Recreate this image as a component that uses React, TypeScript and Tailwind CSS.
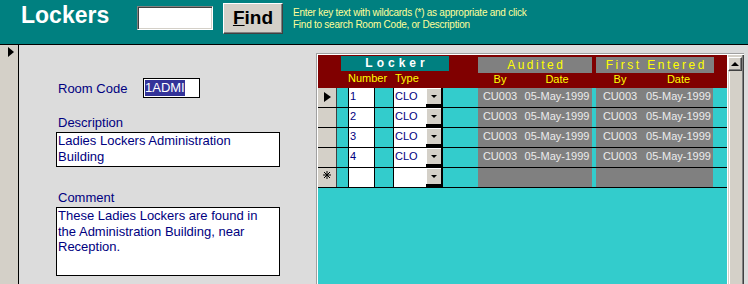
import React from "react";

type Locker = {
  num: string;
  type: string;
  by: string;
  date: string;
  firstBy: string;
  firstDate: string;
};

const lockers: Locker[] = [
  { num: "1", type: "CLO", by: "CU003", date: "05-May-1999", firstBy: "CU003", firstDate: "05-May-1999" },
  { num: "2", type: "CLO", by: "CU003", date: "05-May-1999", firstBy: "CU003", firstDate: "05-May-1999" },
  { num: "3", type: "CLO", by: "CU003", date: "05-May-1999", firstBy: "CU003", firstDate: "05-May-1999" },
  { num: "4", type: "CLO", by: "CU003", date: "05-May-1999", firstBy: "CU003", firstDate: "05-May-1999" },
];

function LockerRow({ rec, current, isNew }: { rec?: Locker; current?: boolean; isNew?: boolean }) {
  return (
    <div className="flex h-[20px] border-b border-black text-[11px] leading-[14px]">
      {/* record selector */}
      <div className="flex w-[19px] justify-center border-r border-[#404040] bg-[#d4d0c8] pt-[4px]">
        {current && <div className="h-0 w-0 border-y-[5px] border-l-[7px] border-y-transparent border-l-black" />}
        {isNew && (
          <svg width="8" height="8" viewBox="0 0 8 8" className="mt-[-1px]">
            <path d="M4 0V8M0 4H8M1 1L7 7M7 1L1 7" stroke="#000" strokeWidth="1" />
          </svg>
        )}
      </div>
      <div className="w-[11px] bg-[#33cccc]" />
      <div className="w-[27px] border-x border-black bg-white pl-px pt-px text-[#000080]">{rec?.num}</div>
      <div className="w-[18px] bg-[#33cccc]" />
      {/* type combo */}
      <div className="flex w-[50px] border-l border-black bg-white">
        <div className="flex-1 pl-px pt-px text-[#000080]">{rec?.type}</div>
        <div className="flex w-[17px] items-center justify-center border-r-2 border-b-[3px] border-black bg-[#d4d0c8] shadow-[inset_1px_1px_0_#ffffff]">
          <div className="h-0 w-0 border-x-[3px] border-t-[3px] border-x-transparent border-t-black" />
        </div>
      </div>
      <div className="w-[35px] bg-[#33cccc]" />
      <div className="flex w-[114px] bg-[#808080] pt-px text-[#ececec]">
        <div className="w-[44px] text-center">{rec?.by}</div>
        <div className="w-[70px] text-center">{rec?.date}</div>
      </div>
      <div className="w-[4px] bg-[#33cccc]" />
      <div className="flex w-[117px] bg-[#808080] pt-px text-[#ececec]">
        <div className="w-[48px] text-center">{rec?.firstBy}</div>
        <div className="w-[69px] text-center">{rec?.firstDate}</div>
      </div>
      <div className="flex-1 bg-[#33cccc]" />
    </div>
  );
}

export default function App() {
  return (
    <div className="h-[284px] w-[748px] overflow-hidden bg-[#dcdcdc] font-['Liberation_Sans',Arial,sans-serif]">
      {/* title bar */}
      <div className="flex h-[45px] items-start border-b border-black bg-[#008080]">
        <div className="ml-[21px] w-[116px] pt-[4px] text-[23px] font-bold leading-[23px] text-white">Lockers</div>
        <div className="mt-[6px] h-[24px] w-[76px] border border-t-[#808080] border-l-[#808080] border-r-white border-b-white bg-white shadow-[inset_1px_1px_0_#404040,inset_-1px_-1px_0_#d4d0c8]" />
        <div className="ml-[10px] mt-[3px] flex h-[31px] w-[60px] items-center justify-center border border-t-white border-l-white border-r-[#404040] border-b-[#404040] bg-[#d4d0c8] text-[19px] font-bold text-black shadow-[inset_-1px_-1px_0_#808080]">
          <span>
            <span className="underline">F</span>ind
          </span>
        </div>
        <div className="ml-[10px] mt-[7px] text-[10px] leading-[12px] tracking-[-0.25px] text-[#ffff99]">
          Enter key text with wildcards (*) as appropriate and click
          <br />
          Find to search Room Code, or Description
        </div>
      </div>

      <div className="flex h-[239px] items-start">
        {/* record selector */}
        <div className="h-full w-[19px] border-r border-black bg-[#d4d0c8] pl-[8px] pt-[2px]">
          <div className="h-0 w-0 border-y-[5px] border-l-[6px] border-y-transparent border-l-black" />
        </div>

        {/* main form */}
        <div className="w-[297px] pl-[37px] pt-[33px] text-[13px] text-[#000080]">
          <div className="flex h-[20px] items-center">
            <span className="w-[87px] pl-[2px] leading-[15px]">Room Code</span>
            <div className="flex h-[20px] w-[57px] items-center border border-black bg-white pl-px">
              <span className="bg-[#333399] leading-[16px] text-white">1ADMI</span>
            </div>
          </div>
          <div className="mt-[17px] pl-[2px] leading-[15px]">Description</div>
          <div className="mt-[2px] h-[35px] w-[224px] border border-black bg-white px-px leading-[16px]">
            Ladies Lockers Administration
            <br />
            Building
          </div>
          <div className="mt-[23px] pl-[2px] leading-[15px]">Comment</div>
          <div className="mt-[2px] h-[69px] w-[224px] border border-black bg-white px-px leading-[15.5px]">
            These Ladies Lockers are found in
            <br />
            the Administration Building, near
            <br />
            Reception.
          </div>
        </div>

        {/* locker subform */}
        <div className="mt-[8px] h-[240px] w-[428px] border-l border-t border-[#a0a0a0]">
          <div className="flex h-full border-l border-t border-white">
            <div className="flex w-[409px] flex-col bg-[#33cccc]">
              <div className="h-[33px] bg-[#800000]">
                <div className="flex h-[18px] items-start">
                  <div className="w-[23px]" />
                  <div className="mt-px h-[15px] w-[108px] bg-[#008080] pl-[4px] text-center text-[12px] font-bold leading-[15px] tracking-[4px] text-white">
                    Locker
                  </div>
                  <div className="w-[29px]" />
                  <div className="mt-[2px] h-[16px] w-[114px] bg-[#808080] pl-[2.5px] text-center text-[12px] leading-[16px] tracking-[2.5px] text-[#ffff00]">
                    Audited
                  </div>
                  <div className="w-[4px]" />
                  <div className="mt-[2px] h-[16px] w-[118px] bg-[#808080] pl-[2.5px] text-center text-[12px] leading-[16px] tracking-[2.5px] text-[#ffff00]">
                    First Entered
                  </div>
                </div>
                <div className="flex h-[15px] text-[11px] leading-[12px] text-[#ffff00]">
                  <div className="w-[30px]" />
                  <div className="-mt-px w-[27px] text-center">Number</div>
                  <div className="w-[18px]" />
                  <div className="-mt-px w-[50px] pl-[2px]">Type</div>
                  <div className="w-[35px]" />
                  <div className="w-[44px] text-center">By</div>
                  <div className="w-[70px] text-center">Date</div>
                  <div className="w-[4px]" />
                  <div className="w-[48px] text-center">By</div>
                  <div className="w-[69px] text-center">Date</div>
                </div>
              </div>
              {lockers.map((rec, i) => (
                <LockerRow key={rec.num} rec={rec} current={i === 0} />
              ))}
              <LockerRow isNew />
            </div>

            {/* scroll bar */}
            <div className="flex w-[17px] flex-col border-l border-white bg-[#d4d0c8] pr-[2px] shadow-[inset_-1px_0_0_#404040,inset_-2px_0_0_#808080]">
              <div className="mt-[2px] flex h-[14px] w-[14px] items-center justify-center border border-t-white border-l-white border-r-[#404040] border-b-[#404040] shadow-[inset_-1px_-1px_0_#808080]">
                <div className="h-0 w-0 border-x-[4px] border-b-[4px] border-x-transparent border-b-black" />
              </div>
              <div className="ml-px mt-px flex-1 border-l border-white" />
            </div>
          </div>
        </div>
      </div>
    </div>
  );
}
